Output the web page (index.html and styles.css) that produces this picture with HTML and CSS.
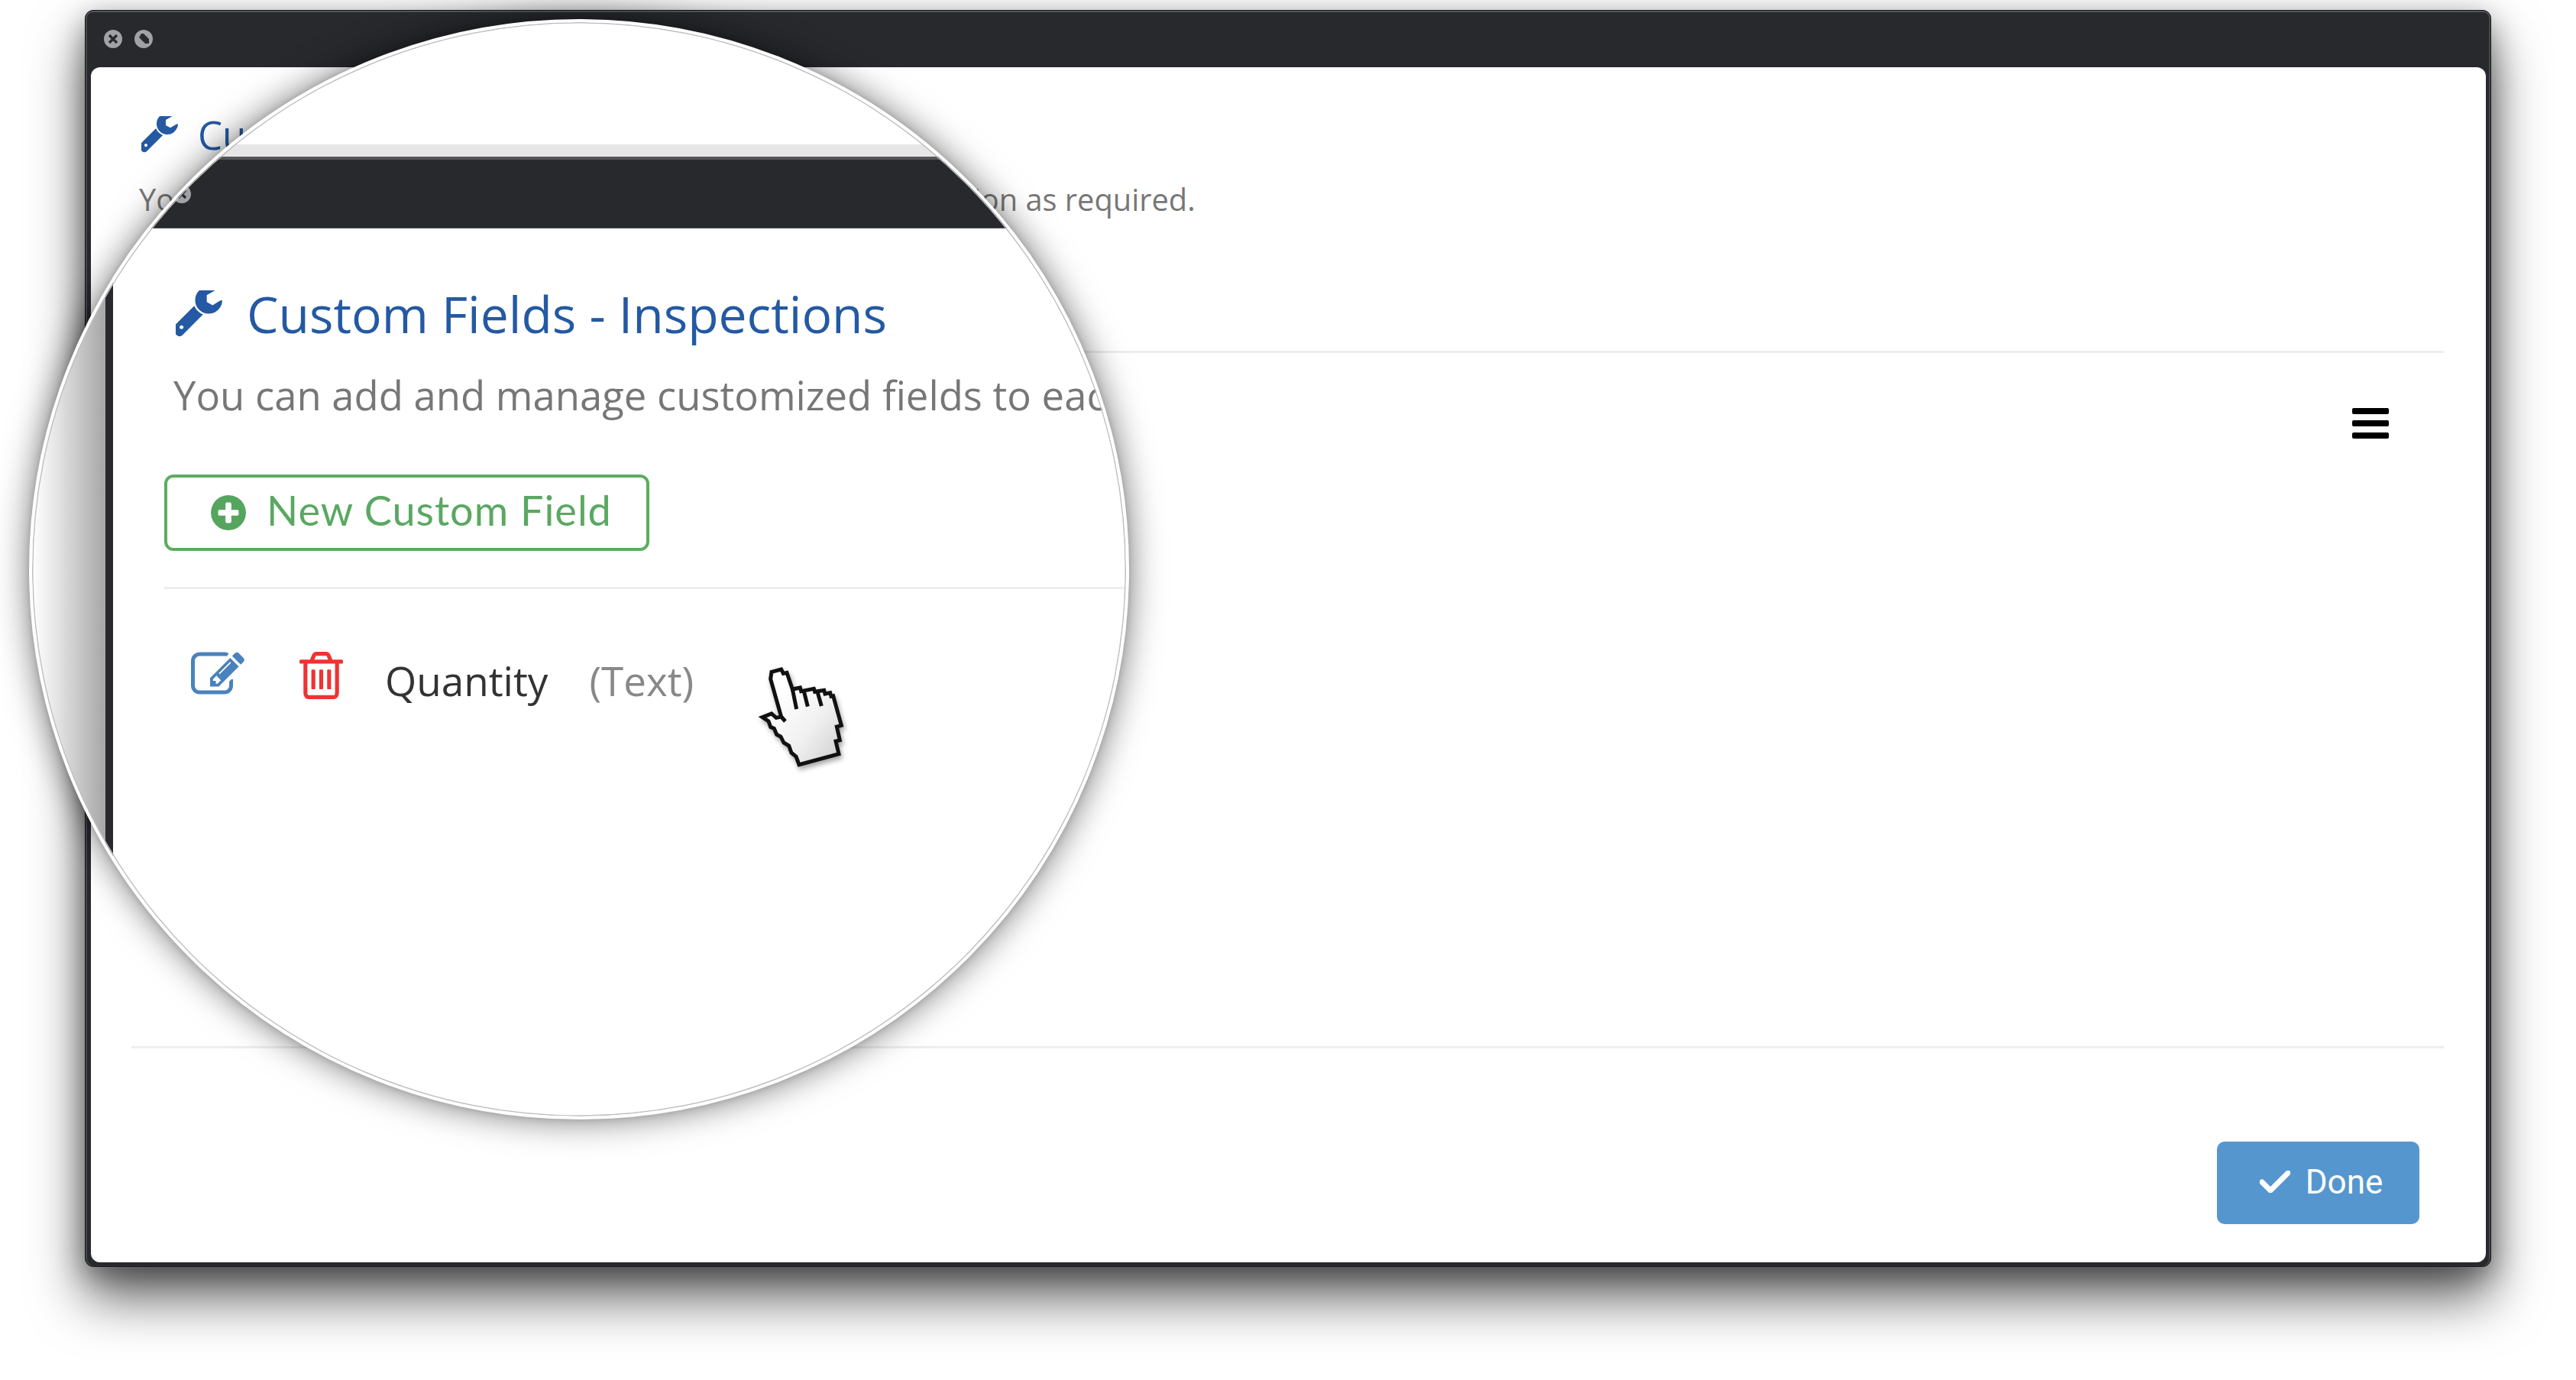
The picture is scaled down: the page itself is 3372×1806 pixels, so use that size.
FILE: index.html
```html
<!DOCTYPE html>
<html lang="en">
<head>
    <meta charset="UTF-8">
    <title>Custom Fields - Inspections</title>
    <link rel="stylesheet" href="styles.css">
</head>
<body>
    <div class="window">
        <div class="titlebar">
            <svg class="win-btn" viewBox="0 0 24 24"><circle cx="12" cy="12" r="12" fill="#a1a2a6"/><path d="M7 7l10 10M17 7L7 17" stroke="#2a2b30" stroke-width="3.4"/></svg>
            <svg class="win-btn" viewBox="0 0 24 24"><circle cx="12" cy="12" r="12" fill="#a1a2a6"/><path d="M9 5h3l7 7v6h-5L6 10z" fill="#2a2b30"/></svg>
        </div>
        <div class="frame">
            <div class="page">
                <div class="page-title">
                    <svg class="icon-wrench" viewBox="128 128 1536 1536"><path d="M384 1344q0-26-19-45t-45-19-45 19-19 45 19 45 45 19 45-19 19-45zm644-420l-682 682q-37 37-90 37-52 0-91-37l-106-108q-38-36-38-90 0-53 38-91l681-681q39 98 114.5 173.5t173.5 114.5zm634-435q0 39-23 106-47 134-164.5 217.5t-258.5 83.5q-185 0-316.5-131.5t-131.5-316.5 131.5-316.5 316.5-131.5q58 0 121.5 16.5t107.5 46.5q16 11 16 28t-16 28l-293 169v224l193 107q5-3 79-48.5t135.5-81 70.5-35.5q15 0 23.5 10t8.5 25z"/></svg>
                    <span>Custom Fields - Inspections</span>
                </div>
                <p class="page-sub">You can add and manage customized fields to each inspection as required.</p>
                <hr class="rule rule-top">
                <div class="menu-row">
                    <div class="menu-icon"><i></i><i></i><i></i></div>
                </div>
                <hr class="rule rule-bottom">
                <div class="footer-row">
                    <button class="done-btn">
                        <svg class="icon-check" viewBox="0 0 40 29"><path d="M3 15L14 26L37 3"/></svg>
                        Done
                    </button>
                </div>
            </div>
        </div>
    </div>

    <div class="lens">
        <div class="lens-blank"></div>
        <div class="lens-band"></div>
        <div class="lens-stage">
            <div class="lens-shadow"></div>
            <div class="mag-window">
                <div class="mag-titlebar">
                    <svg class="win-btn" viewBox="0 0 24 24"><circle cx="12" cy="12" r="12" fill="#a1a2a6"/><path d="M7 7l10 10M17 7L7 17" stroke="#2a2b30" stroke-width="3.4"/></svg>
                </div>
                <div class="mag-body">
                    <div class="mag-title">
                        <svg class="mag-wrench" viewBox="128 128 1536 1536"><path d="M384 1344q0-26-19-45t-45-19-45 19-19 45 19 45 45 19 45-19 19-45zm644-420l-682 682q-37 37-90 37-52 0-91-37l-106-108q-38-36-38-90 0-53 38-91l681-681q39 98 114.5 173.5t173.5 114.5zm634-435q0 39-23 106-47 134-164.5 217.5t-258.5 83.5q-185 0-316.5-131.5t-131.5-316.5 131.5-316.5 316.5-131.5q58 0 121.5 16.5t107.5 46.5q16 11 16 28t-16 28l-293 169v224l193 107q5-3 79-48.5t135.5-81 70.5-35.5q15 0 23.5 10t8.5 25z"/></svg>
                        <span>Custom Fields - Inspections</span>
                    </div>
                    <p class="mag-sub">You can add and manage customized fields to each inspection as required.</p>
                    <div class="new-btn">
                        <svg class="icon-plus" viewBox="128 128 1536 1536"><path d="M1344 960v-128q0-26-19-45t-45-19h-256v-256q0-26-19-45t-45-19h-128q-26 0-45 19t-19 45v256h-256q-26 0-45 19t-19 45v128q0 26 19 45t45 19h256v256q0 26 19 45t45 19h128q26 0 45-19t19-45v-256h256q26 0 45-19t19-45zm320-64q0 209-103 385.5t-279.5 279.5-385.5 103-385.5-103-279.5-279.5-103-385.5 103-385.5 279.5-279.5 385.5-103 385.5 103 279.5 279.5 103 385.5z"/></svg>
                        <span class="new-btn-text">New Custom Field</span>
                    </div>
                    <hr class="mag-rule">
                    <div class="field-row">
                        <svg class="icon-edit" viewBox="0 120 1790 1420"><path d="M888 1184l116-116-152-152-116 116v56h96v96h56zm440-720q-16-16-33 1l-350 350q-17 17-1 33t33-1l350-350q17-17 1-33zm80 594v190q0 119-84.5 203.5t-203.5 84.5h-832q-119 0-203.5-84.5t-84.5-203.5v-832q0-119 84.5-203.5t203.5-84.5h832q63 0 117 25 15 7 18 23 3 17-9 29l-49 49q-14 14-32 8-23-6-45-6h-832q-66 0-113 47t-47 113v832q0 66 47 113t113 47h832q66 0 113-47t47-113v-126q0-13 9-22l64-64q15-15 35-7t20 29zm-96-738l288 288-672 672h-288v-288zm444 132l-92 92-288-288 92-92q28-28 68-28t68 28l152 152q28 28 28 68t-28 68z"/></svg>
                        <svg class="icon-trash" viewBox="192 128 1408 1536"><path d="M704 736v576q0 14-9 23t-23 9h-64q-14 0-23-9t-9-23v-576q0-14 9-23t23-9h64q14 0 23 9t9 23zm256 0v576q0 14-9 23t-23 9h-64q-14 0-23-9t-9-23v-576q0-14 9-23t23-9h64q14 0 23 9t9 23zm256 0v576q0 14-9 23t-23 9h-64q-14 0-23-9t-9-23v-576q0-14 9-23t23-9h64q14 0 23 9t9 23zm128 724v-948h-896v948q0 22 7 40.5t14.5 27 10.5 8.5h832q3 0 10.5-8.5t14.5-27 7-40.5zm-672-1076h448l-48-117q-7-9-17-11h-317q-10 2-17 11zm928 32v64q0 14-9 23t-23 9h-96v948q0 83-47 143.5t-113 60.5h-832q-66 0-113-58.5t-47-141.5v-952h-96q-14 0-23-9t-9-23v-64q0-14 9-23t23-9h309l70-167q15-37 54-63t79-26h320q40 0 79 26t54 63l70 167h309q14 0 23 9t9 23z"/></svg>
                        <span class="field-name">Quantity</span>
                        <span class="field-type">(Text)</span>
                    </div>
                </div>
            </div>
        </div>
    </div>

    <svg class="cursor" viewBox="0 0 540 540">
        <defs>
            <linearGradient id="hand-fill" x1="0.2" y1="0.3" x2="0.9" y2="0.95">
                <stop offset="0" stop-color="#ffffff"/>
                <stop offset="0.55" stop-color="#f0f0f0"/>
                <stop offset="1" stop-color="#d4d4d4"/>
            </linearGradient>
        </defs>
        <path class="hand" d="M150 118 L188 108 L196 124 L210 121 L232 186 L262 180 L266 194 L316 184 L320 196 L356 190 L360 204 L380 200 L384 214 L392 212 L424 328 L406 333 L418 386 L402 390 L414 440 L258 482 L246 450 L228 436 L218 408 L198 396 L186 372 L170 364 L160 340 L146 334 L138 312 L114 296 L150 282 L168 298 L188 294 L146 146 Z"/>
        <path class="hand-line" d="M232 186 L248 264 M276 190 L292 254 M330 196 L346 252 M188 294 L204 312"/>
    </svg>
</body>
</html>
```

FILE: styles.css
```css
html, body {
    margin: 0;
    padding: 0;
    height: 100%;
    background-color: white;
    overflow: hidden;
}
body {
    position: relative;
    padding-top: 13px;
    box-sizing: border-box;
    font-family: "Open Sans", sans-serif;
}

/* outer window */
.window {
    margin-left: 111px;
    width: 3150px;
    height: 1645px;
    display: flex;
    flex-direction: column;
    box-sizing: border-box;
    background-color: #28292d;
    border: 1px solid #18191c;
    border-radius: 11px;
    box-shadow: inset 0 2px 0 #55565a, inset 2px 0 0 #45464a, inset -2px 0 0 #45464a, 0 40px 70px rgba(0,0,0,0.62), 0 10px 36px rgba(0,0,0,0.35);
}
.titlebar {
    height: 74px;
    flex: none;
    display: flex;
    align-items: center;
    gap: 16px;
    padding-left: 24px;
    box-sizing: border-box;
}
.win-btn {
    width: 24px;
    height: 24px;
    flex: none;
}
.frame {
    flex: 1;
    padding: 0 6px 5px 7px;
    display: flex;
    min-height: 0;
}
.page {
    flex: 1;
    display: flex;
    flex-direction: column;
    background-color: white;
    border-radius: 12px;
    padding: 0 55px 0 53px;
}
.page-title {
    display: flex;
    align-items: center;
    margin: 58px 0 0 13px;
    height: 60px;
    font-size: 51px;
    line-height: 60px;
    color: #2459a3;
}
.icon-wrench {
    width: 48px;
    height: 48px;
    fill: #2459a3;
    margin-right: 26px;
}
.page-sub {
    margin: 30px 0 0 10px;
    font-size: 39.8px;
    line-height: 50px;
    color: #777;
}
.rule {
    border: none;
    height: 3px;
    background-color: #eee;
    margin: 0;
}
.rule-top {
    margin-top: 173px;
}
.menu-row {
    display: flex;
    justify-content: flex-end;
    padding-right: 72px;
    margin-top: 72px;
}
.menu-icon {
    width: 48px;
    display: flex;
    flex-direction: column;
    gap: 8px;
}
.menu-icon i {
    display: block;
    height: 8px;
    background-color: #000;
    border-radius: 2px;
}
.rule-bottom {
    margin-top: auto;
}
.footer-row {
    display: flex;
    justify-content: flex-end;
    padding: 122px 32px 50px 0;
}
.done-btn {
    width: 265px;
    height: 108px;
    display: flex;
    align-items: center;
    justify-content: center;
    gap: 20px;
    padding: 0 0 3px 8px;
    background-color: #5596cf;
    color: white;
    border: none;
    border-radius: 10px;
    font-family: Roboto, sans-serif;
    font-size: 44px;
}
.icon-check {
    width: 40px;
    height: 29px;
    fill: none;
    stroke: white;
    stroke-width: 7;
    stroke-linecap: round;
    stroke-linejoin: round;
}

/* magnifier */
.lens {
    position: absolute;
    left: 38px;
    top: 25px;
    width: 1440px;
    height: 1440px;
    box-sizing: border-box;
    border: 4px solid white;
    border-radius: 50%;
    overflow: hidden;
    display: flex;
    flex-direction: column;
    background-color: white;
    box-shadow: 0 0 46px rgba(0,0,0,0.55), 0 0 8px rgba(0,0,0,0.15);
}
.lens-blank {
    height: 160px;
    flex: none;
}
.lens-band {
    height: 16px;
    flex: none;
    background-color: #e6e6e6;
}
.lens-stage {
    flex: 1;
    display: flex;
    min-height: 0;
}
.lens-shadow {
    width: 96px;
    flex: none;
    background: linear-gradient(to right, #fff 0, #e8e8e8 30%, #a6a6a6 100%);
}
.mag-window {
    flex: 1;
    border-left: 10px solid #28292d;
    background-color: white;
}
.mag-titlebar {
    height: 94px;
    box-sizing: border-box;
    margin-left: -10px;
    padding-left: 88px;
    display: flex;
    align-items: center;
    background-color: #28292d;
    border-top: 4px solid #55565a;
    border-bottom: 1px solid #555;
}
.mag-body {
    padding-left: 67px;
}
.mag-title {
    display: flex;
    align-items: center;
    height: 80px;
    margin: 71px 0 0 15px;
    font-size: 66px;
    line-height: 80px;
    color: #2459a3;
    white-space: nowrap;
}
.mag-wrench {
    width: 61px;
    height: 61px;
    fill: #2459a3;
    margin-right: 32px;
}
.mag-sub {
    margin: 37px 0 0 12px;
    font-size: 52.6px;
    line-height: 60px;
    color: #777;
    white-space: nowrap;
}
.new-btn {
    width: 635px;
    height: 100px;
    margin-top: 74px;
    box-sizing: border-box;
    border: 4px solid #5cad5f;
    border-radius: 12px;
    display: flex;
    align-items: center;
    padding-left: 57px;
    gap: 27px;
    font-family: Lato, sans-serif;
    font-size: 54px;
    letter-spacing: 1px;
    color: #5aa862;
}
.new-btn-text {
    margin-top: -8px;
}
.icon-plus {
    width: 46px;
    height: 46px;
    fill: #55a55f;
}
.mag-rule {
    border: none;
    height: 3px;
    background-color: #eee;
    margin: 47px 0 0 0;
}
.field-row {
    display: flex;
    align-items: center;
    height: 80px;
    margin-top: 79px;
    padding-left: 35px;
}
.icon-edit {
    width: 70px;
    height: 56px;
    fill: #4a82bd;
    margin: -18px 72px 0 0;
}
.icon-trash {
    width: 57px;
    height: 62px;
    fill: #ee3333;
    margin: -12px 55px 0 0;
}
.field-name {
    font-size: 53px;
    color: #333;
}
.field-type {
    font-size: 53px;
    color: #888;
    margin-left: 54px;
}

/* ring of the lens, drawn over its content */
.lens::after {
    content: "";
    position: absolute;
    inset: 0;
    border-radius: 50%;
    box-shadow: inset 0 0 0 1.5px #bdbdbd;
}

.cursor {
    position: absolute;
    left: 960px;
    top: 840px;
    width: 180px;
    height: 180px;
    filter: drop-shadow(2px 4px 3px rgba(0,0,0,0.35));
}
.hand {
    fill: url(#hand-fill);
    stroke: #111;
    stroke-width: 15;
    stroke-linejoin: miter;
}
.hand-line {
    fill: none;
    stroke: #111;
    stroke-width: 15;
}
```
